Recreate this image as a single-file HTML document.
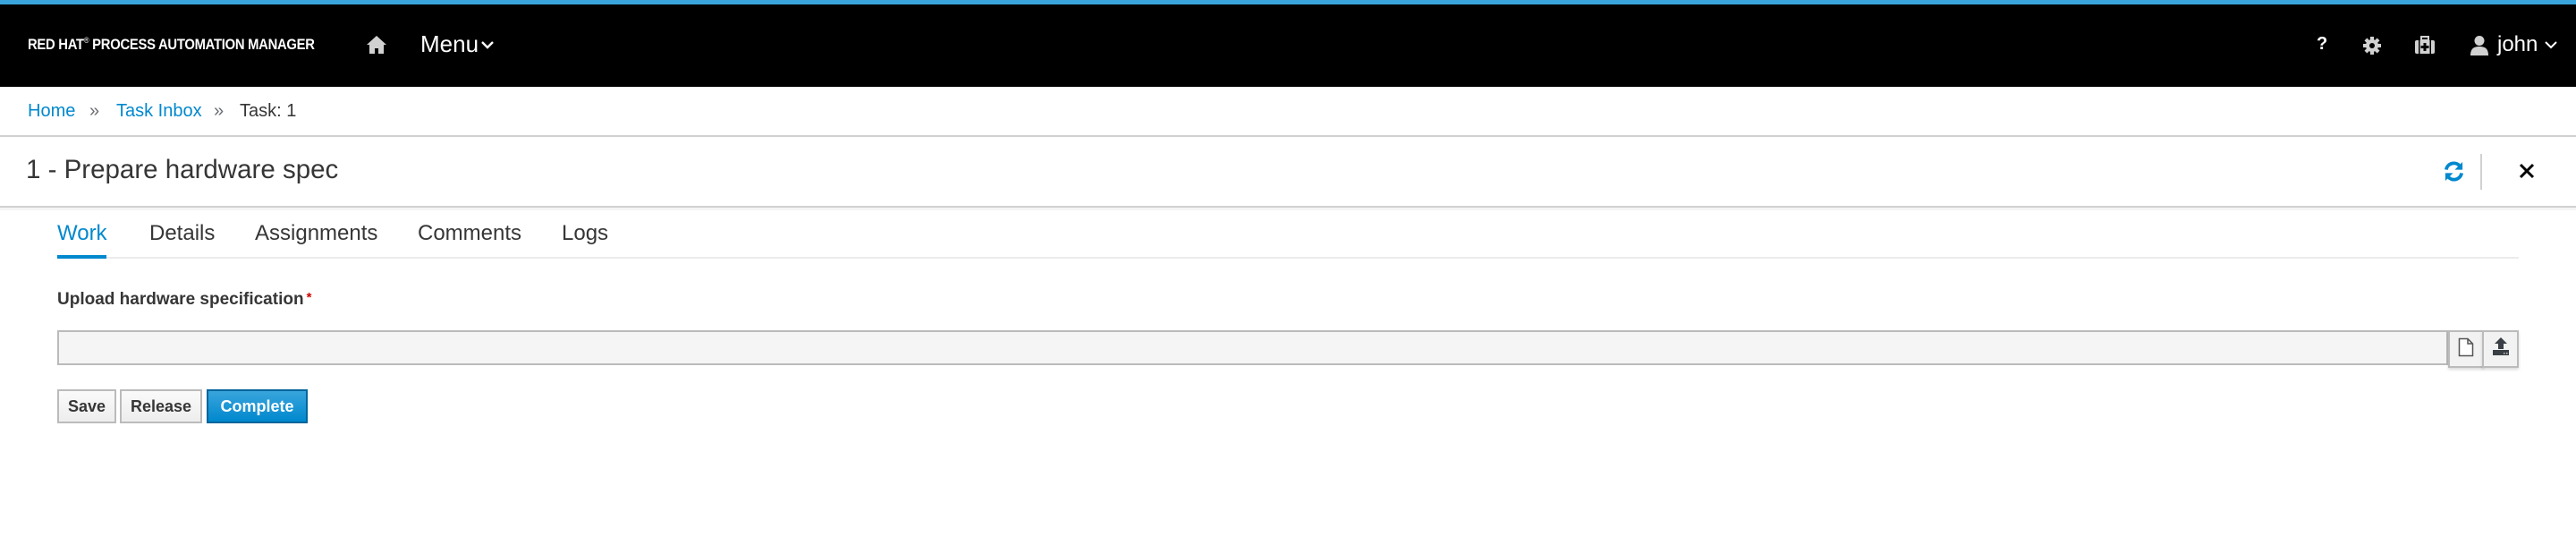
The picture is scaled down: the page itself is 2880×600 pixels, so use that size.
<!DOCTYPE html>
<html><head><meta charset="utf-8"><style>
*{margin:0;padding:0;box-sizing:border-box}
body{width:2880px;height:600px;background:#fff;font-family:"Liberation Sans",sans-serif;position:relative;overflow:hidden;color:#363636}
.a{position:absolute;white-space:nowrap}
</style></head><body>
<div class="a" style="left:0;top:0;width:2880px;height:5px;background:#39a5dc"></div>
<div class="a" style="left:0;top:5px;width:2880px;height:92px;background:#000"></div>
<div class="a" style="left:31px;top:40px;color:#fff;font-weight:bold;font-size:17px;letter-spacing:-0.3px;transform:scaleX(0.87);transform-origin:left">RED HAT<span style="font-weight:normal;font-size:9px;vertical-align:top">®</span> PROCESS AUTOMATION MANAGER</div>
<svg class="a" style="left:409px;top:39px" width="24" height="22" viewBox="0 0 24 22"><path d="M12 1 L1 11 L4 11 L4 21 L10 21 L10 15 L14 15 L14 21 L20 21 L20 11 L23 11 Z" fill="#d1d1d1"/></svg>
<div class="a" style="left:470px;top:34px;color:#fff;font-size:26px">Menu</div>
<svg class="a" style="left:537px;top:44px" width="16" height="12" viewBox="0 0 16 12"><path d="M2 3 L8 9 L14 3" stroke="#fff" stroke-width="2.4" fill="none"/></svg>
<div class="a" style="left:2590px;top:38px;color:#fff;font-size:20px;font-weight:bold">?</div>
<svg class="a" style="left:2641px;top:40px" width="22" height="22" viewBox="0 0 22 22"><g fill="#d1d1d1"><circle cx="11" cy="11" r="7"/><rect x="9" y="1" width="4" height="20"/><rect x="1" y="9" width="20" height="4"/><rect x="9" y="1" width="4" height="20" transform="rotate(45 11 11)"/><rect x="9" y="1" width="4" height="20" transform="rotate(-45 11 11)"/></g><circle cx="11" cy="11" r="3" fill="#000"/></svg>
<svg class="a" style="left:2699px;top:40px" width="24" height="21" viewBox="0 0 24 21"><rect x="8" y="1" width="8" height="4" fill="none" stroke="#d1d1d1" stroke-width="2"/><rect x="1" y="5" width="22" height="15" rx="2" fill="#d1d1d1"/><rect x="5" y="5" width="1.5" height="15" fill="#000"/><rect x="17.5" y="5" width="1.5" height="15" fill="#000"/><path d="M10.5 8h3v3h3v3h-3v3h-3v-3h-3v-3h3z" fill="#000"/></svg>
<svg class="a" style="left:2761px;top:39px" width="22" height="23" viewBox="0 0 22 23"><circle cx="11" cy="6.5" r="5.5" fill="#d1d1d1"/><path d="M1 23 C1 15 5 13 11 13 C17 13 21 15 21 23Z" fill="#d1d1d1"/></svg>
<div class="a" style="left:2792px;top:36px;color:#fff;font-size:24px">john</div>
<svg class="a" style="left:2844px;top:45px" width="16" height="10" viewBox="0 0 16 10"><path d="M2 2 L8 8 L14 2" stroke="#fff" stroke-width="2" fill="none"/></svg>

<div class="a" style="left:31px;top:113px;font-size:20px;color:#0088ce">Home</div>
<div class="a" style="left:100px;top:113px;font-size:20px;color:#6a6e73">»</div>
<div class="a" style="left:130px;top:113px;font-size:20px;color:#0088ce">Task Inbox</div>
<div class="a" style="left:239px;top:113px;font-size:20px;color:#6a6e73">»</div>
<div class="a" style="left:268px;top:113px;font-size:20px;color:#363636">Task: 1</div>
<div class="a" style="left:0;top:151px;width:2880px;height:2px;background:#d1d1d1"></div>

<div class="a" style="left:29px;top:173px;font-size:29.5px;color:#363636">1 - Prepare hardware spec</div>
<svg class="a" style="left:2732px;top:180px" width="23" height="23" viewBox="0 0 24 24"><path d="M3 10 A9 9 0 0 1 19 6" stroke="#0088ce" stroke-width="4" fill="none"/><path d="M22 1 L22 10 L13 10Z" fill="#0088ce"/><path d="M21 14 A9 9 0 0 1 5 18" stroke="#0088ce" stroke-width="4" fill="none"/><path d="M2 23 L2 14 L11 14Z" fill="#0088ce"/></svg>
<div class="a" style="left:2773px;top:172px;width:2px;height:40px;background:#d1d1d1"></div>
<svg class="a" style="left:2816px;top:182px" width="18" height="18" viewBox="0 0 18 18"><path d="M2 2 L16 16 M16 2 L2 16" stroke="#000" stroke-width="3"/></svg>
<div class="a" style="left:0;top:230px;width:2880px;height:2px;background:#d1d1d1"></div>
<div class="a" style="left:0;top:232px;width:2880px;height:3px;background:#f5f5f5"></div>

<div class="a" style="left:64px;top:247px;font-size:24px;color:#0088ce">Work</div>
<div class="a" style="left:167px;top:247px;font-size:24px">Details</div>
<div class="a" style="left:285px;top:247px;font-size:24px">Assignments</div>
<div class="a" style="left:467px;top:247px;font-size:24px">Comments</div>
<div class="a" style="left:628px;top:247px;font-size:24px">Logs</div>
<div class="a" style="left:64px;top:287px;width:2752px;height:2px;background:#ececec"></div>
<div class="a" style="left:64px;top:285px;width:55px;height:4px;background:#0088ce"></div>

<div class="a" style="left:64px;top:324px;font-size:19px;font-weight:bold;color:#363636">Upload hardware specification<span style="color:#c00;font-size:15px;vertical-align:top;margin-left:3px">*</span></div>
<div class="a" style="left:64px;top:369px;width:2673px;height:39px;background:#f5f5f5;border:2px solid #bbb"></div>
<div class="a" style="left:2737px;top:369px;width:40px;height:42px;background:#f2f2f2;border:2px solid #bbb;box-shadow:0 2px 3px rgba(0,0,0,.15)"></div>
<div class="a" style="left:2775px;top:369px;width:41px;height:42px;background:#f2f2f2;border:2px solid #bbb;box-shadow:0 2px 3px rgba(0,0,0,.15)"></div>
<svg class="a" style="left:2748px;top:377px" width="18" height="22" viewBox="0 0 18 22"><path d="M1.5 1.5 H11 L16.5 7 V20.5 H1.5 Z M11 1.5 V7 H16.5" stroke="#555" stroke-width="1.5" fill="#fff"/></svg>
<svg class="a" style="left:2786px;top:376px" width="20" height="22" viewBox="0 0 20 22"><path d="M10 1 L17 8 L13 8 L13 14 L7 14 L7 8 L3 8Z" fill="#393f44"/><rect x="1" y="15" width="18" height="6" fill="#393f44"/><rect x="13" y="18" width="1.5" height="1.5" fill="#ccc"/><rect x="16" y="18" width="1.5" height="1.5" fill="#ccc"/></svg>

<div class="a" style="left:64px;top:435px;width:66px;height:38px;background:linear-gradient(#fafafa,#ededed);border:2px solid #bbb;font-size:18px;font-weight:bold;line-height:34px;text-align:center;color:#363636">Save</div>
<div class="a" style="left:134px;top:435px;width:92px;height:38px;background:linear-gradient(#fafafa,#ededed);border:2px solid #bbb;font-size:18px;font-weight:bold;line-height:34px;text-align:center;color:#363636">Release</div>
<div class="a" style="left:231px;top:435px;width:113px;height:38px;background:linear-gradient(#39a5dc,#0088ce);border:2px solid #00659c;font-size:18px;font-weight:bold;line-height:34px;text-align:center;color:#fff">Complete</div>
</body></html>
